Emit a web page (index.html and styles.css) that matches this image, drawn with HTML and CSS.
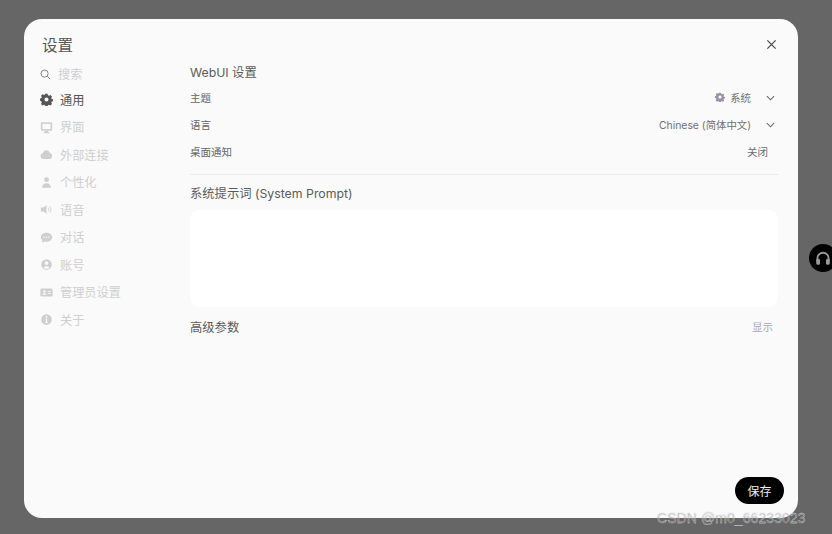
FILE: index.html
```html
<!DOCTYPE html>
<html lang="zh">
<head>
<meta charset="utf-8">
<title>设置</title>
<link rel="stylesheet" href="styles.css">
</head>
<body>
<div class="overlay">
  <div class="dialog">
    <header class="head">
      <h1 class="title">设置</h1>
      <svg class="close" viewBox="0 0 12 12"><path d="M1.500 1.500l9 9M10.500 1.500l-9 9"/></svg>
    </header>
    <div class="main">
      <nav class="side">
        <div class="search">
          <svg class="ico-search" viewBox="0 0 12 12"><circle cx="5" cy="5" r="3.900"/><path d="M7.900 7.900l3.100 3.100"/></svg>
          <span>搜索</span>
        </div>
        <div class="item active">
          <svg class="ico" viewBox="0 0 16 16"><path fill-rule="evenodd" d="M6.600 1h2.800l.4 1.900 1.300.6 1.700-1 2 2-1 1.700.6 1.300 1.900.4v2.200l-1.900.4-.6 1.300 1 1.700-2 2-1.700-1-1.300.6-.4 1.900H6.600l-.4-1.900-1.300-.6-1.700 1-2-2 1-1.700-.6-1.300L-.300 9.100V6.900l1.900-.4.6-1.300-1-1.700 2-2 1.700 1 1.300-.6zM8 5.500a2.500 2.500 0 1 0 0 5 2.500 2.500 0 0 0 0-5z"/></svg>
          <span>通用</span>
        </div>
        <div class="item">
          <svg class="ico" viewBox="0 0 16 16"><path fill-rule="evenodd" d="M2.500 1.500h11A1.500 1.500 0 0 1 15 3v7.500a1.500 1.500 0 0 1-1.500 1.500h-11A1.500 1.500 0 0 1 1 10.500V3a1.500 1.500 0 0 1 1.500-1.500z"/><path d="M6 12h4v1.500h1.500V15h-7v-1.500H6z"/><path class="cut" d="M3 3.500h10V10H3z"/></svg>
          <span>界面</span>
        </div>
        <div class="item">
          <svg class="ico" viewBox="0 0 16 16"><path d="M4 13.500a3.500 3.500 0 0 1-.7-6.900 4.500 4.500 0 0 1 8.600-.9A4 4 0 0 1 12 13.500z"/></svg>
          <span>外部连接</span>
        </div>
        <div class="item">
          <svg class="ico" viewBox="0 0 16 16"><circle cx="8" cy="4.500" r="3"/><path d="M2.500 14.500c0-3.500 2.500-5.500 5.500-5.500s5.500 2 5.500 5.500z"/></svg>
          <span>个性化</span>
        </div>
        <div class="item">
          <svg class="ico" viewBox="0 0 16 16"><path d="M8 2.500v11L4.500 10.500H1v-5h3.500z"/><path class="wave" d="M10 5.800a3 3 0 0 1 0 4.400M12 4a6 6 0 0 1 0 8"/></svg>
          <span>语音</span>
        </div>
        <div class="item">
          <svg class="ico" viewBox="0 0 16 16"><path fill-rule="evenodd" d="M8 2c3.900 0 7 2.500 7 5.600s-3.100 5.600-7 5.600c-.8 0-1.500-.1-2.200-.3L2.500 14.500l.8-2.800C2 10.700 1 9.200 1 7.600 1 4.500 4.100 2 8 2zM5 6.700a.9.900 0 1 0 0 1.800.9.900 0 0 0 0-1.800zm3 0a.9.900 0 1 0 0 1.800.9.900 0 0 0 0-1.800zm3 0a.9.900 0 1 0 0 1.800.9.900 0 0 0 0-1.800z"/></svg>
          <span>对话</span>
        </div>
        <div class="item">
          <svg class="ico" viewBox="0 0 16 16"><path fill-rule="evenodd" d="M8 1.500a6.500 6.500 0 1 1 0 13 6.500 6.500 0 0 1 0-13zM8 4a2.300 2.300 0 1 0 0 4.600A2.300 2.300 0 0 0 8 4zm-3.700 8.100c1 1 2.300 1.400 3.700 1.400s2.700-.4 3.700-1.400c-.6-1.300-2-2-3.700-2s-3.100.7-3.700 2z"/></svg>
          <span>账号</span>
        </div>
        <div class="item">
          <svg class="ico" viewBox="0 0 16 16"><path fill-rule="evenodd" d="M2 3h12a1.500 1.500 0 0 1 1.500 1.500v7A1.500 1.500 0 0 1 14 13H2a1.500 1.500 0 0 1-1.500-1.500v-7A1.500 1.500 0 0 1 2 3zm3.300 2.300a1.500 1.500 0 1 0 0 3 1.500 1.500 0 0 0 0-3zM2.800 10.800h5c0-1.200-1-1.900-2.500-1.900s-2.500.7-2.500 1.900zM9.500 6v1.100h4V6zm0 2.500v1.100h4V8.500z"/></svg>
          <span>管理员设置</span>
        </div>
        <div class="item">
          <svg class="ico" viewBox="0 0 16 16"><path fill-rule="evenodd" d="M8 1.500a6.500 6.500 0 1 1 0 13 6.500 6.500 0 0 1 0-13zM8 3.800a1.100 1.100 0 1 0 0 2.200 1.100 1.100 0 0 0 0-2.200zM6.700 7v1.200h.7v3h-.8v1.100h2.900v-1.100h-.8V7z"/></svg>
          <span>关于</span>
        </div>
      </nav>
      <section class="content">
        <h2 class="sec-title">WebUI 设置</h2>
        <div class="row first">
          <span>主题</span>
          <div class="ctl">
            <svg class="ico-sys" viewBox="0 0 16 16"><path fill-rule="evenodd" d="M6.600 1h2.800l.4 1.900 1.300.6 1.700-1 2 2-1 1.700.6 1.300 1.900.4v2.200l-1.900.4-.6 1.300 1 1.700-2 2-1.700-1-1.300.6-.4 1.900H6.600l-.4-1.900-1.300-.6-1.700 1-2-2 1-1.700-.6-1.300L-.300 9.100V6.900l1.900-.4.6-1.300-1-1.700 2-2 1.700 1 1.300-.6zM8 5.500a2.500 2.500 0 1 0 0 5 2.500 2.500 0 0 0 0-5z"/></svg>
            <span class="ctl-text">系统</span>
            <svg class="chev" viewBox="0 0 10 6"><path d="M1 1l4 4 4-4"/></svg>
          </div>
        </div>
        <div class="row">
          <span>语言</span>
          <div class="ctl">
            <span class="ctl-text">Chinese (简体中文)</span>
            <svg class="chev" viewBox="0 0 10 6"><path d="M1 1l4 4 4-4"/></svg>
          </div>
        </div>
        <div class="row">
          <span>桌面通知</span>
          <span class="toggle">关闭</span>
        </div>
        <hr class="rule">
        <h2 class="sec-title">系统提示词 (System Prompt)</h2>
        <div class="prompt"></div>
        <div class="adv">
          <span class="adv-title">高级参数</span>
          <span class="show">显示</span>
        </div>
        <div class="foot"><button class="save">保存</button></div>
      </section>
    </div>
  </div>
</div>
<div class="float">
  <svg viewBox="0 0 24 24"><path d="M4.500 17v-4.500a7.500 7.500 0 0 1 15 0V17"/><rect class="cup" x="3" y="13" width="5" height="8" rx="2"/><rect class="cup" x="16" y="13" width="5" height="8" rx="2"/></svg>
</div>
<div class="mark">CSDN @m0_66233023</div>
</body>
</html>
```

FILE: styles.css
```css
* { box-sizing: border-box; }
html, body { margin: 0; height: 100%; overflow: hidden; }
body {
  font-family: "Inter", "Noto Sans CJK SC", sans-serif;
  background: #666666;
  color: #4a4a4a;
  position: relative;
}
.overlay { height: 534px; padding: 19px 34px 16px 24px; }
.dialog {
  height: 499px;
  background: #fafafa;
  border-radius: 18px;
  display: flex;
  flex-direction: column;
}
.head {
  height: 46px;
  padding: 17px 21px 0 18px;
  display: flex;
  justify-content: space-between;
  align-items: flex-start;
}
.title { margin: 0; font-size: 15.500px; line-height: 20px; font-weight: 400; color: #555; }
.close { width: 11px; height: 11px; margin-top: 3px; fill: none; stroke: #444; stroke-width: 1.300; }
.main { flex: 1; display: flex; min-height: 0; }
.side { width: 166px; padding-left: 16px; font-size: 12.200px; color: #cfcfcf; }
.search { height: 18px; display: flex; align-items: center; gap: 7px; margin-bottom: 3px; }
.ico-search { width: 11px; height: 11px; fill: none; stroke: #777; stroke-width: 1; }
.item { height: 27.500px; display: flex; align-items: center; gap: 7px; }
.item.active { color: #555; }
.ico { width: 13px; height: 13px; flex: none; fill: currentColor; }
.wave { fill: none; stroke: currentColor; stroke-width: 1; }
.cut { fill: #fafafa; }
.content { width: 589px; display: flex; flex-direction: column; font-size: 10.500px; color: #666; }
.sec-title { margin: 0; font-size: 12.300px; line-height: 16px; font-weight: 400; color: #5a5a5a; }
.row { height: 27px; display: flex; align-items: center; justify-content: space-between; }
.row.first { margin-top: 2.500px; }
.ctl { display: flex; align-items: center; padding-right: 4px; }
.ico-sys { width: 10px; height: 10px; fill: #9a92ad; margin-right: 5px; }
.ctl-text { font-size: 10.400px; color: #707070; }
.chev { width: 9px; height: 6px; margin: 1px 0 0 15px; fill: none; stroke: #666; stroke-width: 1.200; }
.toggle { font-size: 10.500px; color: #707070; padding-right: 11px; }
.rule { width: 100%; margin: 9px 0 11px; border: 0; border-top: 1px solid #ececec; }
.prompt { width: 588px; height: 97px; margin-top: 8px; background: #fff; border-radius: 9px; }
.adv { display: flex; align-items: center; justify-content: space-between; height: 40px; }
.adv-title { font-size: 12.300px; color: #5a5a5a; }
.show { font-size: 10.500px; color: #a8a8a8; padding-right: 6px; }
.foot { margin-top: auto; display: flex; justify-content: flex-end; padding: 0 14px 14px 0; margin-right: -19px; }
.save {
  width: 49px; height: 27px; padding: 0; border: 0; border-radius: 14px;
  background: #000; color: #eee; font: 12px "Noto Sans CJK SC", sans-serif;
}
.float {
  position: absolute; left: 809px; top: 244px;
  width: 28px; height: 28px; border-radius: 50%;
  background: #000; display: flex; align-items: center; justify-content: center;
}
.float svg { width: 18px; height: 18px; fill: none; stroke: #999; stroke-width: 2.400; }
.float .cup { fill: #999; stroke: none; }
.mark {
  position: absolute; left: 657px; top: 510px;
  font-size: 13.900px; line-height: 17px; font-family: "Liberation Sans", sans-serif;
  color: transparent;
  -webkit-text-stroke: .3px rgba(245, 245, 245, .9);
  text-shadow: 0 0 1px rgba(110, 110, 110, .55);
  letter-spacing: .15px;
}
```
